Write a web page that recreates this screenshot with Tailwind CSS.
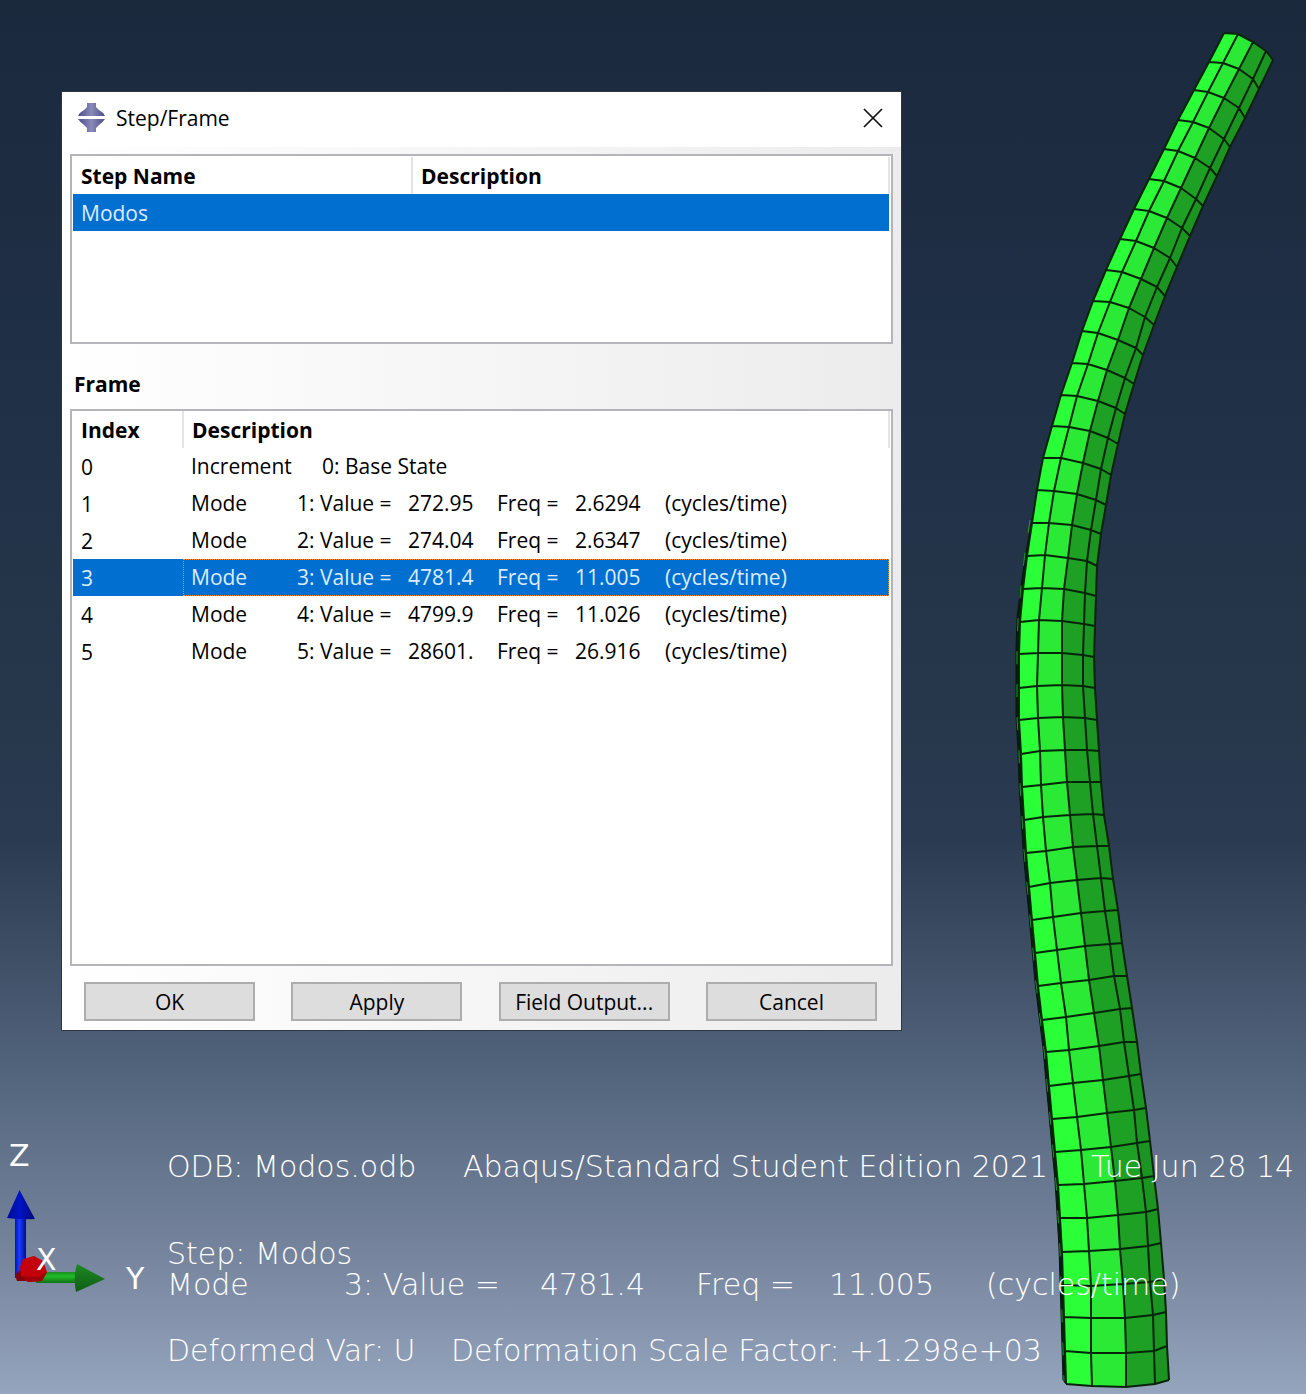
<!DOCTYPE html>
<html lang="en">
<head>
<meta charset="utf-8">
<title>Step/Frame</title>
<script src="https://cdn.jsdelivr.net/npm/@tailwindcss/browser@4"></script>
</head>
<body>
<main class="relative min-h-screen w-full overflow-hidden bg-[linear-gradient(to_bottom,#1b293d_0%,#1f2f45_25%,#26374c_50%,#2a3b51_60%,#3d4d64_68%,#50617a_76%,#61718a_82%,#76859d_90%,#96a5be_100%)] pt-[92px] pl-[62px]">

  <!-- Deformed mesh -->
  <svg id="mesh" class="absolute top-0 left-0" width="1306" height="1394" viewBox="0 0 1306 1394" fill="none" stroke-linejoin="round" role="img" aria-label="Deformed beam mesh"></svg>

  <!-- Step/Frame dialog -->
  <section role="dialog" aria-labelledby="dialog-title" class="relative flex h-[938px] w-[839px] max-w-full flex-col bg-[linear-gradient(to_right,#ffffff,#ececec)] font-['Open_Sans','Noto_Sans',sans-serif] text-[21px] leading-9 text-black outline outline-1 outline-[#2f3640]">
    <header class="flex h-[55px] shrink-0 items-center bg-white pr-4 pb-1 pl-4">
      <svg class="mr-2.5" width="28" height="30" viewBox="0 0 28 30" aria-hidden="true">
        <defs><linearGradient id="logo" x1="0" x2="1"><stop offset="0" stop-color="#4c4c8c"/><stop offset=".5" stop-color="#8a8ab8"/><stop offset="1" stop-color="#4c4c8c"/></linearGradient></defs>
        <path d="M0 13Q2 9 6 7L9 4V0H18V4L21 7Q25 9 27 13Z" fill="url(#logo)"/>
        <path d="M0 16H27Q25 19 21 22L18 25V29H9V25L6 22Q2 19 0 16Z" fill="url(#logo)"/>
      </svg>
      <h1 id="dialog-title" class="grow">Step/Frame</h1>
      <button type="button" aria-label="Close" class="p-0.5">
        <svg width="20" height="20" viewBox="0 0 20 20" stroke="#111" stroke-width="1.7"><path d="M1 1L19 19M19 1L1 19"/></svg>
      </button>
    </header>

    <div class="flex grow flex-col px-2 pt-[7px]">
      <div class="h-[190px] shrink-0 border-2 border-[#b4b5ba] bg-white p-px">
        <table class="w-full table-fixed border-collapse text-left">
          <thead>
            <tr class="h-[37px]">
              <th class="w-[339px] border-r-2 border-[#e4e4e4] p-0 pl-2 leading-8">Step Name</th>
              <th class="border-r-2 border-[#e4e4e4] p-0 pl-2 leading-8">Description</th>
            </tr>
          </thead>
          <tbody>
            <tr class="h-[37px] bg-[#006fd0] text-[#dcecff]"><td class="p-0 pl-2">Modos</td><td class="p-0"></td></tr>
          </tbody>
        </table>
      </div>

      <h2 class="mt-[22px] pl-1 font-bold">Frame</h2>

      <div class="mt-[7px] h-[557px] shrink-0 border-2 border-[#b4b5ba] bg-white px-px">
        <table class="w-full table-fixed border-collapse text-left whitespace-nowrap">
          <thead>
            <tr class="h-[37px]">
              <th class="w-[110px] border-r-2 border-[#e4e4e4] p-0 pl-2 leading-8">Index</th>
              <th class="border-r-2 border-[#e4e4e4] p-0 pl-2 leading-8">Description</th>
            </tr>
          </thead>
          <tbody id="frames"></tbody>
        </table>
      </div>

      <footer class="mt-4 flex justify-between pr-4 pl-3.5 leading-8">
        <button type="button" class="h-[39px] w-[171px] border-2 border-[#adadad] bg-[#dddddd]">OK</button>
        <button type="button" class="h-[39px] w-[171px] border-2 border-[#adadad] bg-[#dddddd]">Apply</button>
        <button type="button" class="h-[39px] w-[171px] border-2 border-[#adadad] bg-[#dddddd]">Field Output...</button>
        <button type="button" class="h-[39px] w-[171px] border-2 border-[#adadad] bg-[#dddddd]">Cancel</button>
      </footer>
    </div>
  </section>

  <!-- Axis triad -->
  <svg class="absolute top-[1130px] left-0" width="160" height="180" viewBox="0 0 160 180" aria-label="Axis triad">
    <defs>
      <linearGradient id="zs" x1="0" x2="1"><stop offset="0" stop-color="#0014b4"/><stop offset=".4" stop-color="#1c3cff"/><stop offset="1" stop-color="#000c90"/></linearGradient>
      <linearGradient id="zc" x1="0" x2="1"><stop offset="0" stop-color="#000c90"/><stop offset=".45" stop-color="#0014c8"/><stop offset="1" stop-color="#000878"/></linearGradient>
      <linearGradient id="ys" x1="0" y1="0" x2="0" y2="1"><stop offset="0" stop-color="#189020"/><stop offset=".4" stop-color="#22bc28"/><stop offset="1" stop-color="#107018"/></linearGradient>
      <linearGradient id="yc" x1="0" y1="0" x2="0" y2="1"><stop offset="0" stop-color="#1c8a22"/><stop offset="1" stop-color="#105c16"/></linearGradient>
    </defs>
    <rect x="15" y="86" width="11" height="62" fill="url(#zs)"/>
    <path d="M19.500 60L35 89Q21 90 7 88Z" fill="url(#zc)"/>
    <path d="M36 142H77V153H36Z" fill="url(#ys)"/>
    <path d="M77 134L105 149L76 162Q73 148 77 134Z" fill="url(#yc)"/>
    <path d="M15 145L20 140L30 151H17Z" fill="#80000c"/>
    <path d="M20 137L23 129L34 126L43 131L47 142L42 151L28 152L21 146Z" fill="#c4000c"/>
    <path d="M21 146L28 152L42 151L47 142L38 147Z" fill="#a0000a"/>
    <g class="font-['DejaVu_Sans',sans-serif] text-[30px]" fill="#fff">
      <text x="9" y="36">Z</text><text x="36" y="140">X</text><text x="126" y="159">Y</text>
    </g>
  </svg>

  <!-- Viewport state block -->
  <div class="absolute top-[1151px] left-[167px] font-['DejaVu_Sans',sans-serif] text-[30px] leading-[31px] font-extralight whitespace-nowrap text-white">
    <p class="flex"><span class="w-[296px] shrink-0">ODB: Modos.odb</span><span class="w-[628px] shrink-0">Abaqus/Standard Student Edition 2021</span><span>Tue Jun 28 14</span></p>
    <p class="mt-14">Step: Modos</p>
    <p class="flex"><span class="w-[177px] shrink-0">Mode</span><span class="w-[196px] shrink-0">3: Value =</span><span class="w-[156px] shrink-0">4781.4</span><span class="w-[133px] shrink-0">Freq =</span><span class="w-[157px] shrink-0">11.005</span><span>(cycles/time)</span></p>
    <p class="mt-[35px] flex"><span class="w-[284px] shrink-0">Deformed Var: U</span><span>Deformation Scale Factor: +1.298e+03</span></p>
  </div>
</main>

<script>
const frames = [
  [0, 'Increment', '0: Base State'],
  [1, 'Mode', '1: Value =', '272.95', '2.6294'],
  [2, 'Mode', '2: Value =', '274.04', '2.6347'],
  [3, 'Mode', '3: Value =', '4781.4', '11.005'],
  [4, 'Mode', '4: Value =', '4799.9', '11.026'],
  [5, 'Mode', '5: Value =', '28601.', '26.916'],
];
document.getElementById('frames').innerHTML = frames.map(([i, kind, label, value, freq]) => {
  const on = i === 3;
  const text = freq
    ? `<span class="w-[106px]">${kind}</span><span class="w-[111px]">${label}</span><span class="w-[89px]">${value}</span><span class="w-[78px]">Freq =</span><span class="w-[90px]">${freq}</span><span>(cycles/time)</span>`
    : `<span class="w-[131px]">${kind}</span><span>${label}</span>`;
  return `<tr class="h-[37px] ${on ? 'bg-[#006fd0] text-[#dcecff]' : ''}"><td class="p-0 pl-2">${i}</td><td class="p-0"><div class="flex border border-dotted ${on ? 'border-[#ff8a20]' : 'border-transparent'} pl-[7px] leading-[35px]">${text}</div></td></tr>`;
}).join('');

// Mesh rings from tip to root: five nodes each, x y pairs from left to right.
const rings = `1224 33 1238 34 1253 42 1266 51 1273 60
1209 62 1223 63 1239 69 1253 79 1259 89
1194 90 1208 92 1224 98 1239 108 1245 118
1178 120 1193 122 1209 128 1224 139 1230 147
1164 149 1178 151 1195 158 1210 168 1217 176
1149 179 1164 181 1181 188 1196 199 1203 206
1134 209 1149 211 1167 218 1182 228 1190 236
1120 239 1136 241 1154 248 1170 258 1177 267
1106 270 1122 272 1141 279 1157 287 1165 296
1093 301 1110 302 1129 308 1145 317 1154 325
1082 331 1098 333 1118 340 1136 348 1143 355
1072 363 1088 364 1107 370 1125 378 1134 384
1061 395 1077 396 1098 401 1116 408 1125 414
1052 426 1069 427 1090 431 1108 438 1118 444
1043 458 1061 458 1083 463 1101 469 1111 475
1037 490 1054 491 1077 494 1096 500 1106 505
1032 523 1049 523 1072 525 1091 530 1101 534
1027 556 1045 555 1068 558 1087 561 1097 566
1023 589 1042 588 1064 589 1085 593 1096 596
1020 622 1039 620 1062 621 1084 624 1095 626
1019 654 1038 653 1062 653 1083 655 1094 657
1019 688 1037 686 1062 685 1083 686 1095 688
1019 720 1038 718 1063 717 1085 718 1097 720
1021 754 1040 751 1065 750 1087 750 1099 751
1022 787 1041 785 1067 782 1090 782 1101 782
1024 820 1043 817 1070 815 1093 814 1104 815
1026 853 1046 851 1073 847 1097 846 1109 846
1029 887 1050 883 1077 880 1101 878 1113 879
1032 920 1053 917 1081 913 1105 911 1118 910
1035 953 1057 950 1085 946 1110 944 1122 943
1038 986 1061 983 1089 980 1114 976 1127 976
1042 1020 1066 1017 1094 1013 1120 1009 1132 1008
1046 1052 1069 1050 1099 1046 1124 1042 1137 1042
1049 1086 1073 1083 1103 1080 1129 1076 1141 1074
1052 1119 1077 1117 1107 1113 1134 1110 1146 1108
1055 1152 1081 1150 1111 1147 1137 1143 1150 1141
1058 1185 1084 1184 1115 1181 1142 1178 1154 1176
1060 1218 1087 1218 1118 1215 1146 1212 1158 1209
1062 1252 1089 1251 1120 1249 1148 1246 1161 1243
1063 1285 1091 1286 1123 1284 1150 1282 1164 1279
1064 1317 1091 1318 1125 1318 1153 1315 1166 1312
1065 1351 1091 1353 1126 1353 1154 1351 1167 1346
1066 1384 1092 1386 1126 1387 1155 1384 1169 1380`.split('\n').map(r => {
  const n = r.split(' ').map(Number);
  return [0, 2, 4, 6, 8].map(i => [n[i], n[i + 1]]);
});
const fills = ['#2aff38', '#2aea36', '#1ea024', '#1c9422'];
let out = '';
// Back-face sliver along the left side of the lower half.
const side = rings.slice(16).map(r => r[0]);
const outer = side.map(([x, y], i) => [x - Math.min(3, i), y - 4]);
out += `<path d="M${side.join('L')}L${outer.slice().reverse().join('L')}Z" fill="#06200a" stroke="#0a160c"/>`;
out += `<path d="M${side.map(([x, y]) => [x - 2, y - 3]).join('L')}" stroke="#1c9a26" stroke-dasharray="13 20"/>`;
for (let i = 0; i < rings.length - 1; i++)
  for (let c = 0; c < 4; c++)
    out += `<path d="M${rings[i][c]}L${rings[i][c + 1]}L${rings[i + 1][c + 1]}L${rings[i + 1][c]}Z" fill="${fills[c]}"/>`;
const lines = rings.map(r => `M${r.join('L')}`).join('') + [0, 1, 2, 3, 4].map(c => `M${rings.map(r => r[c]).join('L')}`).join('');
out += `<path d="${lines}" stroke="#06240a" stroke-width="2"/>`;
document.getElementById('mesh').innerHTML = out;
</script>
</body>
</html>
